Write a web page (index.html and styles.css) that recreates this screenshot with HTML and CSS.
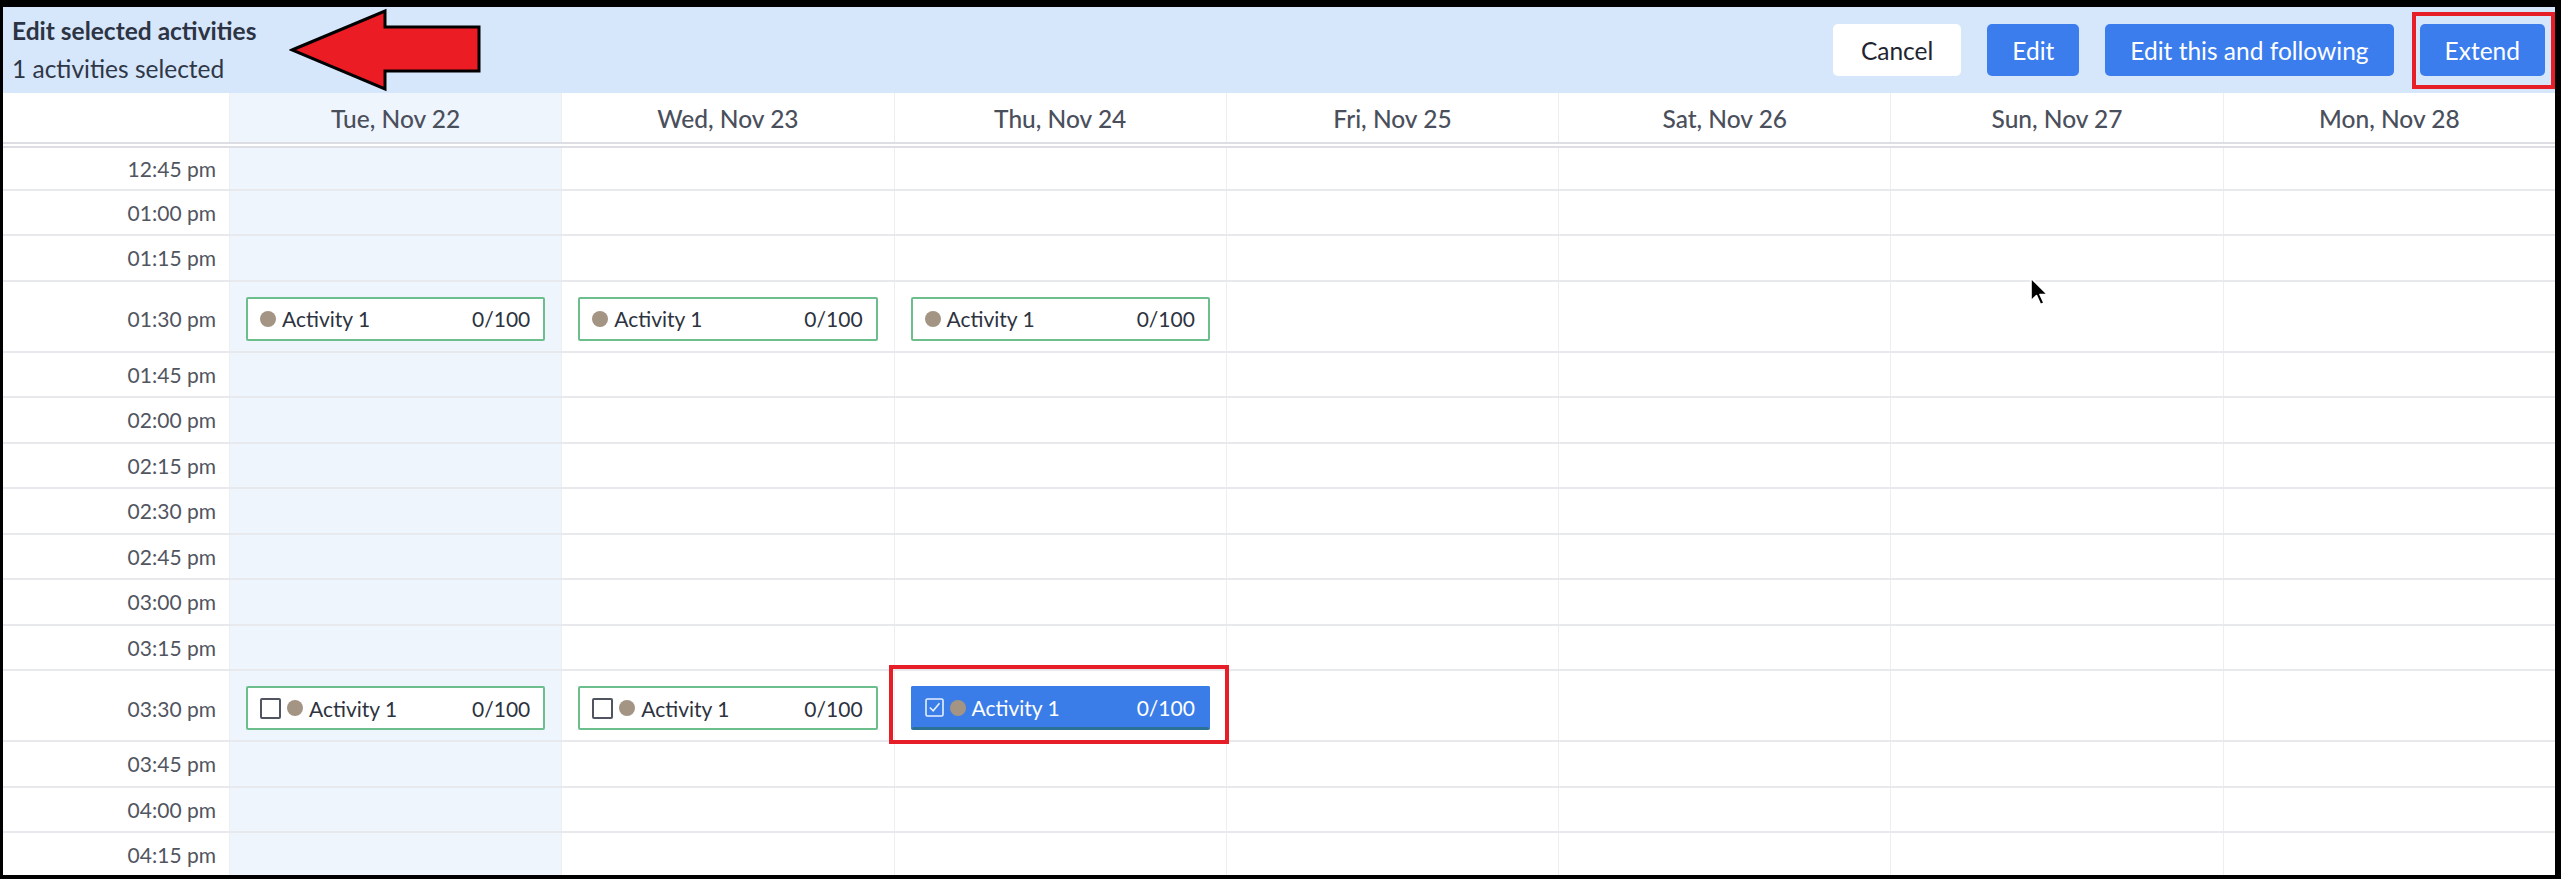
FILE: index.html
```html
<!DOCTYPE html>
<html lang="en">

<head>
    <meta charset="UTF-8">
    <title>Edit selected activities</title>
    <link rel="stylesheet" href="styles.css">
</head>

<body>
    <div class="frame">
        <div class="topbar">
            <div class="selection-info">
                <div class="selection-title">Edit selected activities</div>
                <div class="selection-count">1 activities selected</div>
            </div>
            <div class="actions">
                <button class="btn btn-light">Cancel</button>
                <button class="btn">Edit</button>
                <button class="btn">Edit this and following</button>
                <button class="btn">Extend</button>
            </div>
        </div>

        <div class="day-header">
            <div class="corner"></div>
            <div class="day today">Tue, Nov 22</div>
            <div class="day">Wed, Nov 23</div>
            <div class="day">Thu, Nov 24</div>
            <div class="day">Fri, Nov 25</div>
            <div class="day">Sat, Nov 26</div>
            <div class="day">Sun, Nov 27</div>
            <div class="day">Mon, Nov 28</div>
        </div>

        <div class="grid-body">
            <div class="row first">
                <div class="time">12:45 pm</div>
                <div class="cell today"></div><div class="cell"></div><div class="cell"></div><div class="cell"></div><div class="cell"></div><div class="cell"></div><div class="cell"></div>
            </div>
            <div class="row">
                <div class="time">01:00 pm</div>
                <div class="cell today"></div><div class="cell"></div><div class="cell"></div><div class="cell"></div><div class="cell"></div><div class="cell"></div><div class="cell"></div>
            </div>
            <div class="row">
                <div class="time">01:15 pm</div>
                <div class="cell today"></div><div class="cell"></div><div class="cell"></div><div class="cell"></div><div class="cell"></div><div class="cell"></div><div class="cell"></div>
            </div>
            <div class="row tall">
                <div class="time">01:30 pm</div>
                <div class="cell today">
                    <div class="activity"><span class="dot"></span><span class="name">Activity 1</span><span class="count">0/100</span></div>
                </div>
                <div class="cell">
                    <div class="activity"><span class="dot"></span><span class="name">Activity 1</span><span class="count">0/100</span></div>
                </div>
                <div class="cell">
                    <div class="activity"><span class="dot"></span><span class="name">Activity 1</span><span class="count">0/100</span></div>
                </div>
                <div class="cell"></div><div class="cell"></div><div class="cell"></div><div class="cell"></div>
            </div>
            <div class="row">
                <div class="time">01:45 pm</div>
                <div class="cell today"></div><div class="cell"></div><div class="cell"></div><div class="cell"></div><div class="cell"></div><div class="cell"></div><div class="cell"></div>
            </div>
            <div class="row">
                <div class="time">02:00 pm</div>
                <div class="cell today"></div><div class="cell"></div><div class="cell"></div><div class="cell"></div><div class="cell"></div><div class="cell"></div><div class="cell"></div>
            </div>
            <div class="row">
                <div class="time">02:15 pm</div>
                <div class="cell today"></div><div class="cell"></div><div class="cell"></div><div class="cell"></div><div class="cell"></div><div class="cell"></div><div class="cell"></div>
            </div>
            <div class="row">
                <div class="time">02:30 pm</div>
                <div class="cell today"></div><div class="cell"></div><div class="cell"></div><div class="cell"></div><div class="cell"></div><div class="cell"></div><div class="cell"></div>
            </div>
            <div class="row">
                <div class="time">02:45 pm</div>
                <div class="cell today"></div><div class="cell"></div><div class="cell"></div><div class="cell"></div><div class="cell"></div><div class="cell"></div><div class="cell"></div>
            </div>
            <div class="row">
                <div class="time">03:00 pm</div>
                <div class="cell today"></div><div class="cell"></div><div class="cell"></div><div class="cell"></div><div class="cell"></div><div class="cell"></div><div class="cell"></div>
            </div>
            <div class="row">
                <div class="time">03:15 pm</div>
                <div class="cell today"></div><div class="cell"></div><div class="cell"></div><div class="cell"></div><div class="cell"></div><div class="cell"></div><div class="cell"></div>
            </div>
            <div class="row tall">
                <div class="time">03:30 pm</div>
                <div class="cell today">
                    <div class="activity"><span class="checkbox"></span><span class="dot"></span><span class="name">Activity 1</span><span class="count">0/100</span></div>
                </div>
                <div class="cell">
                    <div class="activity"><span class="checkbox"></span><span class="dot"></span><span class="name">Activity 1</span><span class="count">0/100</span></div>
                </div>
                <div class="cell">
                    <div class="activity selected">
                        <svg class="checked" width="19" height="19" viewBox="0 0 19 19">
                            <rect x="1" y="1" width="17" height="17" rx="1.5" fill="none" stroke="#e6efff" stroke-width="1.6" />
                            <path d="M4.8 9.5 L8.2 12.8 L14.5 5.2" fill="none" stroke="#e6efff" stroke-width="1.6" />
                        </svg>
                        <span class="dot"></span><span class="name">Activity 1</span><span class="count">0/100</span>
                    </div>
                </div>
                <div class="cell"></div><div class="cell"></div><div class="cell"></div><div class="cell"></div>
            </div>
            <div class="row">
                <div class="time">03:45 pm</div>
                <div class="cell today"></div><div class="cell"></div><div class="cell"></div><div class="cell"></div><div class="cell"></div><div class="cell"></div><div class="cell"></div>
            </div>
            <div class="row">
                <div class="time">04:00 pm</div>
                <div class="cell today"></div><div class="cell"></div><div class="cell"></div><div class="cell"></div><div class="cell"></div><div class="cell"></div><div class="cell"></div>
            </div>
            <div class="row">
                <div class="time">04:15 pm</div>
                <div class="cell today"></div><div class="cell"></div><div class="cell"></div><div class="cell"></div><div class="cell"></div><div class="cell"></div><div class="cell"></div>
            </div>
        </div>
    </div>

    <!-- annotations drawn over the screenshot -->
    <svg class="callout-arrow" width="200" height="90" viewBox="0 0 200 90">
        <polygon points="3,42 96,3 96,19 190,19 190,63 96,63 96,81" fill="#ec1c24" stroke="#000" stroke-width="3" stroke-linejoin="miter" />
    </svg>
    <div class="mark mark-extend"></div>
    <div class="mark mark-activity"></div>
    <svg class="cursor" width="22" height="32" viewBox="0 0 22 32">
        <path d="M2 2 L2 25 L7.5 19.5 L11.5 28.5 L15 27 L11 18.5 L18.5 18.5 Z" fill="#000" stroke="#fff" stroke-width="1.6" stroke-linejoin="round" />
    </svg>
</body>

</html>
```

FILE: styles.css
```css
body {
    margin: 0;
    background: #000;
    font-family: Lato, "Open Sans", Arial, sans-serif;
    position: relative;
    height: 879px;
    overflow: hidden;
}

.frame {
    margin: 7px 6px 0 3px;
    height: 868px;
    background: #fff;
    overflow: hidden;
}

/* selection bar */
.topbar {
    height: 86px;
    background-color: #d6e6fb;
    display: flex;
    justify-content: space-between;
    align-items: center;
    padding: 0 10px 0 9px;
    box-sizing: border-box;
}

.selection-title {
    font-size: 24.5px;
    font-weight: 700;
    color: #2c3444;
    line-height: 28px;
}

.selection-count {
    font-size: 24.5px;
    color: #2f3747;
    line-height: 28px;
    margin-top: 10px;
}

.actions {
    display: flex;
    gap: 26px;
    align-items: center;
}

.btn {
    height: 52px;
    padding: 0 25px;
    border: none;
    border-radius: 5px;
    background-color: #3b7ded;
    color: #fff;
    font-family: Lato, "Open Sans", Arial, sans-serif;
    font-size: 24.5px;
    cursor: pointer;
}

.btn-light {
    background-color: #fff;
    color: #1f2430;
    padding: 0 28px;
}

/* calendar grid */
.day-header,
.row {
    display: grid;
    grid-template-columns: 226px repeat(7, 1fr);
    box-sizing: border-box;
}

.day-header {
    height: 55px;
    border-bottom: 6px double #dcdee3;
}

.day {
    display: flex;
    align-items: center;
    justify-content: center;
    padding-top: 2px;
    font-size: 24.5px;
    font-weight: 500;
    color: #4a4f5c;
    border-left: 1px solid #eceef1;
}

.today {
    background-color: #eef5fd;
}

.row {
    height: 45.5px;
    border-bottom: 2px solid #e8e9ec;
}

.row.first {
    height: 42.5px;
}

.row.tall {
    height: 71px;
}

.time {
    display: flex;
    align-items: center;
    justify-content: flex-end;
    padding-right: 13px;
    font-size: 21px;
    color: #51555f;
}

.cell {
    border-left: 1px solid #eceef1;
    display: flex;
    align-items: center;
    padding: 0 16px;
}

.row.tall .time,
.row.tall .cell {
    padding-top: 5px;
}

.activity {
    flex: 1;
    height: 44px;
    box-sizing: border-box;
    border: 2px solid #6cbf8c;
    border-radius: 2px;
    background: #fff;
    display: flex;
    align-items: center;
    padding: 0 13px 0 12px;
    font-size: 21px;
    color: #2d3340;
}

.dot {
    width: 16px;
    height: 16px;
    border-radius: 50%;
    background-color: #a39483;
    margin-right: 6px;
}

.checkbox {
    width: 21px;
    height: 21px;
    box-sizing: border-box;
    border: 2px solid #4f5460;
    border-radius: 2px;
    margin-right: 6px;
}

.name {
    flex: 1;
}

.activity.selected {
    background-color: #3a7de8;
    border-color: #3a7de8;
    border-bottom: 3px solid #2b7194;
    color: #fff;
}

.checked {
    margin-right: 6px;
}

/* annotations */
.callout-arrow {
    position: absolute;
    left: 289px;
    top: 8px;
}

.mark {
    position: absolute;
    border: 4px solid #e61e27;
    box-sizing: border-box;
}

.mark-extend {
    left: 2412px;
    top: 12px;
    width: 143px;
    height: 77px;
}

.mark-activity {
    left: 889px;
    top: 665px;
    width: 340px;
    height: 79px;
}

.cursor {
    position: absolute;
    left: 2029px;
    top: 276px;
}
```
